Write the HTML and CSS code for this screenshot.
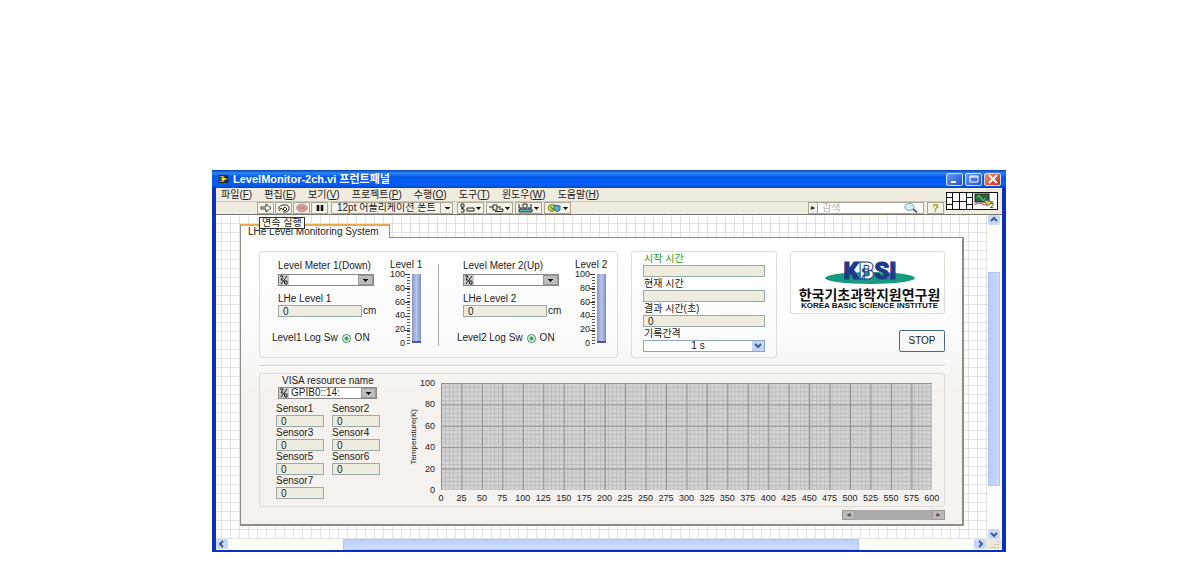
FILE: index.html
```
<!DOCTYPE html>
<html lang="ko">
<head>
<meta charset="utf-8">
<title>LevelMonitor-2ch.vi 프런트패널</title>
<link rel="stylesheet" href="styles.css">
</head>
<body>
<main class="window">
  <header class="titlebar">
    <svg class="app-icon" viewBox="0 0 12 10"><rect width="12" height="10" fill="#222b2a"/><path d="M1 2h6M1 5h10M1 8h6" stroke="#c7d16a"/><path d="M4 2l6 3-6 3z" fill="#ffd83d"/></svg>
    <h1 class="title">LevelMonitor-2ch.vi 프런트패널</h1>
    <button class="win-btn" aria-label="최소화"><svg viewBox="0 0 16 12"><path d="M4 9h5" stroke="#fff" stroke-width="2"/></svg></button>
    <button class="win-btn" aria-label="최대화"><svg viewBox="0 0 16 12"><path d="M4 3h8v6H4zM4 4h8" fill="none" stroke="#fff"/></svg></button>
    <button class="win-btn close" aria-label="닫기"><svg viewBox="0 0 16 12"><path d="M4 2l8 8M12 2l-8 8" stroke="#fff" stroke-width="2"/></svg></button>
  </header>

  <div class="head">
    <div class="head-main">
      <nav class="menu">
        <a href="#">파일(<u>F</u>)</a><a href="#">편집(<u>E</u>)</a><a href="#">보기(<u>V</u>)</a><a href="#">프로젝트(<u>P</u>)</a><a href="#">수행(<u>O</u>)</a><a href="#">도구(<u>T</u>)</a><a href="#">윈도우(<u>W</u>)</a><a href="#">도움말(<u>H</u>)</a>
      </nav>
      <div class="toolbar">
        <button class="tool" aria-label="실행"><svg viewBox="0 0 14 10"><path d="M2 4h5V1l5 4-5 4V6H2z" fill="#fff" stroke="#222" stroke-width=".9"/></svg></button>
        <button class="tool" aria-label="연속 실행"><svg viewBox="0 0 14 10"><path d="M2 6V4l3-2h5l2 2v3l-3 2H6M2 8l2-3 2 2M6 6l2-2 2 2-2 2z" fill="none" stroke="#222" stroke-width=".9"/></svg></button>
        <button class="tool" aria-label="강제 종료"><svg viewBox="0 0 14 10"><ellipse cx="7" cy="5" rx="5.500" ry="4" fill="#d99a96" stroke="#b9b0a8"/><path d="M4 5h6" stroke="#c27d79"/></svg></button>
        <button class="tool" aria-label="일시정지"><svg viewBox="0 0 14 10"><path d="M5 2v6M9 2v6" stroke="#111" stroke-width="2.600"/></svg></button>
        <select class="font-select" aria-label="폰트"><option>12pt 어플리케이션 폰트</option></select>
        <button class="tool wide" aria-label="객체 정렬"><svg viewBox="0 0 24 10"><path d="M2 1h3v3H2zM3.500 4v2M2 6h3v3H2M8 5h7v3H8z" fill="none" stroke="#222"/><path d="M17 4h5l-2.500 3z"/></svg></button>
        <button class="tool wide" aria-label="객체 분배"><svg viewBox="0 0 24 10"><path d="M1 4h4M5 2h4v5H5zM9 4h4M7 8.500h8M11 6h4v2" fill="none" stroke="#222"/><path d="M17 4h5l-2.500 3z"/></svg></button>
        <button class="tool wide" aria-label="크기 조절"><svg viewBox="0 0 24 10"><path d="M2 1v4h3M6 1h4v4H6zM11 5h3V1" fill="none" stroke="#222"/><path d="M2 6h13v3H2z" fill="#55b6bd" stroke="#333"/><path d="M17 4h5l-2.500 3z"/></svg></button>
        <button class="tool wide" aria-label="순서 재설정"><svg viewBox="0 0 24 10"><ellipse cx="6" cy="5" rx="4" ry="3.500" fill="#e5d62e" stroke="#8b8b25"/><path d="M8 2l6 1v4l-3 2-3-3z" fill="#56b2d8" stroke="#286a8d"/><path d="M4 3l4 4M5 6h3" stroke="#2c8a52"/><path d="M17 4h5l-2.500 3z"/></svg></button>
        <div class="search">
          <span class="search-tip">▸</span>
          <input type="search" placeholder="검색" aria-label="검색">
          <svg viewBox="0 0 14 10"><ellipse cx="5.500" cy="4" rx="4.500" ry="3.300" fill="#d4f0fa" stroke="#6d9bb0"/><path d="M9 6l4 3.500" stroke="#496574" stroke-width="1.800"/></svg>
        </div>
        <button class="tool help" aria-label="도움말">?</button>
      </div>
    </div>
    <svg class="connector" viewBox="0 0 52 18"><rect x=".5" y=".5" width="51" height="17" fill="#fff" stroke="#111"/><path d="M6.500 0v18M13.500 0v18M20.500 0v18M26.500 0v18M0 5.500h6M0 12.500h6M6 9.500h14M20 5.500h6M20 12.500h6" stroke="#111"/><rect x="29" y="2" width="14" height="8" fill="#22683c" stroke="#222"/><path d="M31 6q2-5 4 0t4 0" fill="none" stroke="#7ae27a"/><path d="M28 13q6-4 10 0l4-2" fill="none" stroke="#d36f93" stroke-width="1.500"/><path d="M38 8l9 2-6 4z" fill="#e4cf32" stroke="#666"/><text x="44" y="16" class="connector-no">2</text></svg>
  </div>

  <div class="workspace">
    <div class="canvas">
      <div class="tooltip" role="tooltip">연속 실행</div>
      <button class="tab">LHe Level Monitoring System</button>
      <section class="page">
        <div class="top-row">
          <div class="card meters">
            <div class="meter">
              <label for="m1">Level Meter 1(Down)</label>
              <div class="ring"><svg viewBox="0 0 10 10"><path d="M1 1h3L2 5h2M5 6h3v3H6zM8 1L2 9" fill="none" stroke="#222"/></svg><select id="m1"><option></option></select><i class="ring-arrow"></i></div>
              <label for="l1" class="second">LHe Level 1</label>
              <div class="reading"><input id="l1" value="0"><span>cm</span></div>
              <label class="log">Level1 Log Sw <input type="radio" name="log1" checked> ON</label>
            </div>
            <div class="gauge"><span class="gauge-name">Level 1</span>
              <div class="gauge-body"><div class="gauge-scale"><span>100</span><span>80</span><span>60</span><span>40</span><span>20</span><span>0</span></div><div class="ticks"></div><div class="tank"></div></div>
            </div>
            <div class="split"></div>
            <div class="meter">
              <label for="m2">Level Meter 2(Up)</label>
              <div class="ring"><svg viewBox="0 0 10 10"><path d="M1 1h3L2 5h2M5 6h3v3H6zM8 1L2 9" fill="none" stroke="#222"/></svg><select id="m2"><option></option></select><i class="ring-arrow"></i></div>
              <label for="l2" class="second">LHe Level 2</label>
              <div class="reading"><input id="l2" value="0"><span>cm</span></div>
              <label class="log">Level2 Log Sw <input type="radio" name="log2" checked> ON</label>
            </div>
            <div class="gauge"><span class="gauge-name">Level 2</span>
              <div class="gauge-body"><div class="gauge-scale"><span>100</span><span>80</span><span>60</span><span>40</span><span>20</span><span>0</span></div><div class="ticks"></div><div class="tank"></div></div>
            </div>
          </div>
          <div class="card times">
            <label for="t1" class="green">시작 시간</label><input id="t1">
            <label for="t2">현재 시간</label><input id="t2">
            <label for="t3">결과 시간(초)</label><input id="t3" value="0">
            <label for="t4">기록간격</label>
            <div class="combo"><select id="t4"><option>1 s</option></select><i class="combo-arrow"><svg viewBox="0 0 12 10"><path d="M3 3l3 3 3-3" fill="none" stroke="#3f5d91" stroke-width="2"/></svg></i></div>
          </div>
          <div class="side">
            <div class="card logo">
              <svg viewBox="0 0 92 30"><ellipse cx="46" cy="20" rx="45" ry="6" fill="#159a80"/><text x="46" y="21" text-anchor="middle" class="kbsi">K<tspan class="outlined">B</tspan>SI</text></svg>
              <strong>한국기초과학지원연구원</strong>
              <small>KOREA BASIC SCIENCE INSTITUTE</small>
            </div>
            <button class="stop">STOP</button>
          </div>
        </div>
        <hr class="rule">
        <div class="card bottom">
          <div class="sensors">
            <label for="visa" class="visa-name">VISA resource name</label>
            <div class="ring visa"><svg viewBox="0 0 10 10"><path d="M1 1h3L2 5h2M5 6h3v3H6zM8 1L2 9" fill="none" stroke="#222"/></svg><select id="visa"><option>GPIB0::14:</option></select><i class="ring-arrow"></i></div>
            <div class="sensor-grid">
              <label>Sensor1<input value="0"></label><label>Sensor2<input value="0"></label>
              <label>Sensor3<input value="0"></label><label>Sensor4<input value="0"></label>
              <label>Sensor5<input value="0"></label><label>Sensor6<input value="0"></label>
              <label>Sensor7<input value="0"></label>
            </div>
          </div>
          <div class="chart">
            <div class="axis-title"><span>Temperature(K)</span></div>
            <div class="y-axis"><span>100</span><span>80</span><span>60</span><span>40</span><span>20</span><span>0</span></div>
            <div class="plot"></div>
            <div class="x-axis"><span>0</span><span>25</span><span>50</span><span>75</span><span>100</span><span>125</span><span>150</span><span>175</span><span>200</span><span>225</span><span>250</span><span>275</span><span>300</span><span>325</span><span>350</span><span>375</span><span>400</span><span>425</span><span>450</span><span>475</span><span>500</span><span>525</span><span>550</span><span>575</span><span>600</span></div>
          </div>
        </div>
        <div class="graph-scroll"><button aria-label="왼쪽">◄</button><button aria-label="오른쪽">►</button></div>
      </section>
    </div>
    <div class="vscroll">
      <button class="arrow" aria-label="위로"><svg viewBox="0 0 10 8"><path d="M2 5l3-3 3 3" fill="none" stroke="#3f5d91" stroke-width="2"/></svg></button>
      <span class="gap-top"></span><span class="thumb"></span><span class="gap-bottom"></span>
      <button class="arrow" aria-label="아래로"><svg viewBox="0 0 10 8"><path d="M2 3l3 3 3-3" fill="none" stroke="#3f5d91" stroke-width="2"/></svg></button>
    </div>
  </div>
  <div class="hscroll">
    <button class="arrow" aria-label="왼쪽으로"><svg viewBox="0 0 10 8"><path d="M6 1L3 4l3 3" fill="none" stroke="#3f5d91" stroke-width="2"/></svg></button>
    <span class="gap-left"></span><span class="thumb"></span><span class="gap-right"></span>
    <button class="arrow" aria-label="오른쪽으로"><svg viewBox="0 0 10 8"><path d="M4 1l3 3-3 3" fill="none" stroke="#3f5d91" stroke-width="2"/></svg></button>
    <svg class="grip" viewBox="0 0 14 10"><path d="M11 2v1M8 5v1M11 5v1M5 8v1M8 8v1M11 8v1" stroke="#d2b8a4" stroke-width="2"/></svg>
  </div>
</main>
</body>
</html>
```
FILE: styles.css
```
* { box-sizing: border-box; }
body {
  margin: 0;
  padding: 170px 184px 32px 212px;
  background: #fff;
  color: #222;
  font: 10px/12px "Liberation Sans", "Noto Sans CJK KR", sans-serif;
}
button, input, select { margin: 0; padding: 0; font: inherit; color: inherit; border-radius: 0; min-width: 0; }
button { display: flex; align-items: center; justify-content: center; }
select { appearance: none; }
svg { display: block; }

.window { border: solid #0a2fc4; border-width: 0 4px 2px; background: #ece9d8; }
.titlebar {
  display: flex; align-items: center; gap: 2px; height: 18px; margin: 0 -4px; padding: 0 5px 0 6px;
  background: linear-gradient(#0a3fae, #2a86f8 3px, #0556e8 7px, #0561f6 14px, #0446cf);
}
.app-icon { width: 11px; height: 8px; }
.title { flex: 1; margin: 0 0 0 2px; font-size: 11px; line-height: 18px; font-weight: bold; color: #fff; white-space: nowrap; }
.win-btn { width: 17px; height: 13px; border: 1px solid #cfdcf8; border-radius: 2px; background: linear-gradient(135deg, #6f9bf5, #1f4fd0); }
.win-btn svg { width: 16px; height: 12px; flex: none; }
.close { background: linear-gradient(135deg, #ee8a66, #cc2f12); }

.head { display: flex; align-items: center; height: 27px; padding-right: 4px; background: #efecdf; border-bottom: 1px solid #77756c; }
.head-main { flex: 1; min-width: 0; }
.menu { display: flex; gap: 12px; height: 13px; padding-left: 5px; line-height: 13px; white-space: nowrap; }
.menu a { color: #222; text-decoration: none; }
.toolbar { display: flex; align-items: center; gap: 1px; height: 13px; padding: 0 2px 0 41px; border-top: 1px solid #cbc8b8; }
.tool { width: 17px; height: 12px; border: 1px solid #aaa797; background: #f4f2e8; }
.tool svg { width: 14px; height: 10px; flex: none; }
.wide { width: 27px; margin-left: 1px; }
.wide svg { width: 24px; }
.font-select {
  width: 122px; height: 12px; margin: 0 2px; padding-left: 5px; border: 1px solid #aaa797; line-height: 10px;
  background: linear-gradient(#222, #222) 113px 4px / 5px 1px no-repeat, linear-gradient(#222, #222) 114px 5px / 3px 1px no-repeat, linear-gradient(#aaa797, #aaa797) 108px 0 / 1px 12px no-repeat, #f4f2e8;
}
.search { display: flex; align-items: center; width: 116px; height: 12px; margin-left: auto; border: 1px solid #aaa797; background: #fff; }
.search-tip { width: 9px; line-height: 10px; background: #f4f2e8; border-right: 1px solid #aaa797; font-size: 8px; text-align: center; }
.search input { flex: 1; height: 10px; padding-left: 4px; border: 0; background: none; appearance: none; }
.search input::placeholder { color: #b8b8b8; }
.search svg { width: 14px; height: 10px; margin-right: 5px; }
.help { color: #a99b00; font-weight: bold; font-size: 11px; margin-left: 2px; }
.connector { width: 52px; height: 18px; }
.connector-no { font-size: 7px; }

.workspace { display: flex; }
.canvas {
  position: relative; flex: 1; min-width: 0; padding: 9px 24px 13px;
  background: linear-gradient(90deg, #e2e2e2 1px, transparent 1px) 5px 0 / 9px 9px, linear-gradient(#e2e2e2 1px, transparent 1px) 0 8px / 9px 9px, #fff;
}
.tab {
  position: relative; height: 14px; padding: 0 10px 0 7px; margin-bottom: -1px; border: 1px solid #8d8d8d; border-top: 2px solid #e8aa4a; border-bottom: 0;
  background: #fff; line-height: 12px; white-space: nowrap;
}
.tooltip { position: absolute; z-index: 2; left: 43px; top: 2px; padding: 0 2px; border: 1px solid #333; background: #fffff0; line-height: 10px; white-space: nowrap; }
.page {
  padding: 13px 17px 4px 18px; border: 1px solid #8f8d88; border-right-width: 2px; border-bottom-width: 2px;
  background: linear-gradient(#fff 5%, #fafafa 35%, #f5f2ee 55%, #f5f1ee);
}
.card { border: 1px solid #dfdcd7; border-radius: 3px; }
.top-row { display: flex; gap: 13px; height: 107px; }
.meters { display: flex; flex: 1; padding: 8px 7px 0 12px; }
.meter { flex: 1; min-width: 0; padding-left: 6px; white-space: nowrap; }
.meter label { display: block; }
.ring { display: flex; width: 96px; height: 12px; border: 1px solid #888; margin-top: 2px; background: #fff; }
.ring svg { width: 10px; height: 10px; background: #c8c8c8; }
.ring select { flex: 1; height: 10px; padding-left: 2px; border: 0; background: #fff; line-height: 10px; }
.ring-arrow { width: 15px; border: 1px solid #999; background: linear-gradient(#111, #111) 4px 3px / 5px 1px no-repeat, linear-gradient(#111, #111) 5px 4px / 3px 1px no-repeat, linear-gradient(#111, #111) 6px 5px / 1px 1px no-repeat, #bdbdbd; }
.meter .second { margin-top: 7px; }
.reading { display: flex; align-items: center; gap: 1px; }
.reading input { width: 84px; }
input:not([type]) { height: 12px; padding-left: 4px; border: 1px solid #98abaa; background: #eeecdf; line-height: 10px; }
.meter .log { display: flex; align-items: center; gap: 4px; margin: 15px 0 0 -6px; }
.log input { appearance: none; width: 9px; height: 9px; border: 1px solid #3d8060; border-radius: 50%; background: radial-gradient(#2ba64c 1px, #fff 3px); }
.gauge { width: 36px; }
.gauge-name { display: block; padding-left: 1px; line-height: 10px; white-space: nowrap; }
.gauge-body { display: flex; padding-top: 4px; }
.gauge-scale { display: flex; flex-direction: column; justify-content: space-between; width: 16px; height: 79px; margin: -5px 0; text-align: right; font-size: 9px; }
.gauge-scale span { line-height: 10px; }
.ticks {
  width: 5px; height: 70px;
  background: repeating-linear-gradient(#333 0 1px, transparent 1px 14px), repeating-linear-gradient(#555 0 1px, transparent 1px 3px) 2px 0 / 3px 100% no-repeat;
}
.tank { width: 9px; height: 69px; margin-left: 2px; border-bottom: 2px solid #44599b; background: linear-gradient(90deg, #8997c4, #b8c4ec 50%, #7f8fc5); }
.split { width: 1px; height: 82px; margin: 4px 18px 0 13px; background: #aaa; }

.times { display: flex; flex-direction: column; width: 146px; padding: 1px 11px 5px; }
.times label { padding-left: 1px; line-height: 12px; }
.times input:not([type]) { height: 12px; margin-bottom: 1px; }
.green { color: #16a01c; }
.combo { display: flex; height: 13px; border: 1px solid #88a5bd; background: #fff; }
.combo select { flex: 1; border: 0; background: #fff; text-align: center; text-align-last: center; line-height: 10px; }
.combo-arrow { width: 12px; background: #c4d4f8; }
.combo-arrow svg { width: 12px; height: 10px; }

.side { display: flex; flex-direction: column; align-items: flex-end; width: 155px; }
.logo { display: flex; flex-direction: column; align-items: center; width: 100%; height: 63px; padding: 6px 0 0 4px; background: #fff; color: #111; white-space: nowrap; }
.logo svg { width: 92px; height: 30px; overflow: visible; }
.logo strong { font-size: 14px; line-height: 14px; }
.logo small { font-size: 8px; line-height: 8px; font-weight: bold; }
.kbsi { font: 900 24px Roboto, "Liberation Sans", sans-serif; fill: #20398c; stroke: #20398c; stroke-width: 1px; }
.outlined { fill: #fff; }
.stop { width: 46px; height: 22px; margin-top: 16px; border: 1px solid #466987; border-radius: 2px; background: #f8f8f8; }

.rule { height: 2px; margin: 7px 0 6px; border: 0; border-top: 1px solid #dad4cf; border-bottom: 1px solid #fff; }
.bottom { display: flex; height: 134px; padding: 1px 12px 0 16px; }
.sensors { width: 132px; }
.visa-name { display: block; padding-left: 6px; }
.visa { width: 99px; margin: 0 0 4px 2px; }
.sensor-grid { display: grid; grid-template-columns: 48px 48px; column-gap: 8px; }
.sensor-grid label { display: flex; flex-direction: column; line-height: 12px; }
.chart { flex: 1; min-width: 0; display: grid; grid-template: 107px 14px / 12px 21px 1fr; padding-top: 8px; }
.axis-title { display: flex; align-items: center; justify-content: center; }
.axis-title span { writing-mode: vertical-rl; rotate: 180deg; font-size: 8px; line-height: 10px; }
.y-axis { display: flex; flex-direction: column; justify-content: space-between; margin: -5px 0; padding-right: 6px; text-align: right; font-size: 9px; }
.y-axis span { line-height: 10px; }
.plot {
  background:
    linear-gradient(90deg, #8f8f8f 1px, transparent 1px) 0 0 / calc(100% / 24) 100%,
    linear-gradient(#939393 1px, transparent 1px) 0 0 / 100% 20%,
    linear-gradient(90deg, #bcbcbc 1px, transparent 1px) 0 0 / calc(100% / 120) 100%,
    linear-gradient(#bcbcbc 1px, transparent 1px) 0 0 / 100% 4%,
    #d3d3d5;
}
.x-axis { grid-column: 3; display: flex; justify-content: space-between; padding-top: 2px; font-size: 9px; }
.x-axis span { display: flex; justify-content: center; width: 0; }
.graph-scroll { display: flex; justify-content: space-between; width: 103px; height: 10px; margin: 3px 0 0 auto; background: #aaa; }
.graph-scroll button { width: 13px; height: 10px; border: 1px solid #999; background: #bbb; font-size: 7px; color: #555; }

.vscroll { display: flex; flex-direction: column; width: 14px; padding-right: 2px; background: #fdfdfb; }
.arrow { width: 12px; height: 10px; border: 0; border-radius: 2px; background: #c8d8fb; }
.arrow svg { width: 10px; height: 8px; flex: none; }
.thumb { background: linear-gradient(90deg, #bccbfa, #ccd8fe); border: 1px solid #b5c6f3; }
.gap-top { flex: 47; }
.vscroll .thumb { flex: 213; }
.gap-bottom { flex: 43; }
.hscroll { display: flex; height: 11px; background: #fdfdf8; }
.gap-left { flex: 115; }
.hscroll .thumb { flex: 516; background: linear-gradient(#bdd0fb, #cbdcff); }
.gap-right { flex: 115; }
.grip { width: 16px; height: 10px; background: #ece9d8; }
```
